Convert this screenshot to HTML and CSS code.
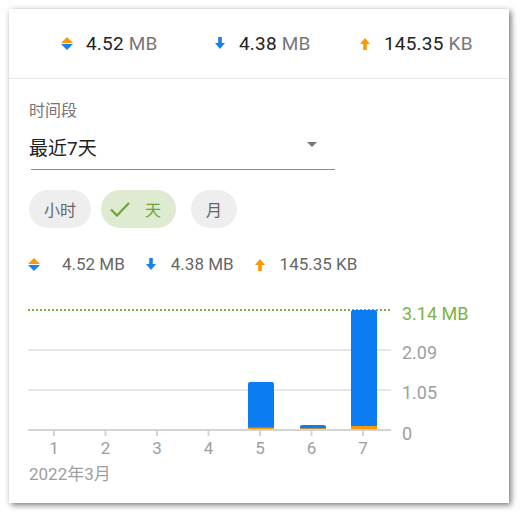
FILE: index.html
```html
<!DOCTYPE html>
<html lang="zh">
<head>
    <meta charset="UTF-8">
    <meta name="viewport" content="width=device-width, initial-scale=1.0">
    <title>流量统计</title>
    <link rel="stylesheet" href="styles.css">
</head>
<body>
    <div class="card">
        <!-- Totals -->
        <div class="totals">
            <div class="stat">
                <svg class="icon" viewBox="0 0 12 13"><path d="M0 6L6 0L12 6Z" fill="#ff9800"/><path d="M0 7L12 7L6 13Z" fill="#1a7ff0"/></svg>
                <span class="num">4.52</span><span class="unit">MB</span>
            </div>
            <div class="stat">
                <svg class="icon" viewBox="0 0 12 13"><path d="M4.2 0H7.8V6H11L6 12L1 6H4.2Z" fill="#1a7ff0"/></svg>
                <span class="num">4.38</span><span class="unit">MB</span>
            </div>
            <div class="stat">
                <svg class="icon" viewBox="0 0 12 13"><path d="M4.2 13H7.8V7H11L6 1L1 7H4.2Z" fill="#ff9800"/></svg>
                <span class="num">145.35</span><span class="unit">KB</span>
            </div>
        </div>

        <div class="content">
            <!-- Period -->
            <div class="field">
                <div class="field-label">时间段</div>
                <div class="select">
                    <span class="select-value">最近7天</span>
                    <span class="caret"></span>
                </div>
                <div class="underline"></div>
            </div>

            <div class="chips">
                <span class="chip">小时</span>
                <span class="chip chip-on">
                    <svg class="check" viewBox="0 0 20 16"><polyline points="1,8.5 7,14.5 19,2" fill="none" stroke="#6ca23f" stroke-width="2.2"/></svg>
                    天
                </span>
                <span class="chip">月</span>
            </div>

            <div class="legend">
                <svg class="icon icon-first" viewBox="0 0 12 13"><path d="M0 6L6 0L12 6Z" fill="#ff9800"/><path d="M0 7L12 7L6 13Z" fill="#1a7ff0"/></svg>
                <span class="legend-text">4.52 MB</span>
                <svg class="icon" viewBox="0 0 12 13"><path d="M4.2 0H7.8V6H11L6 12L1 6H4.2Z" fill="#1a7ff0"/></svg>
                <span class="legend-text">4.38 MB</span>
                <svg class="icon" viewBox="0 0 12 13"><path d="M4.2 13H7.8V7H11L6 1L1 7H4.2Z" fill="#ff9800"/></svg>
                <span class="legend-text">145.35 KB</span>
            </div>

            <!-- Chart -->
            <svg class="chart" width="462" height="163" viewBox="0 0 462 163">
                <line x1="0" y1="51" x2="363" y2="51" class="grid"/>
                <line x1="0" y1="91" x2="363" y2="91" class="grid"/>
                <line x1="0" y1="11" x2="363" y2="11" class="max-line"/>

                <path d="M220 130V85Q220 83 222 83H244Q246 83 246 85V130Z" class="bar-down"/>
                <rect x="220" y="128.5" width="26" height="1.5" class="bar-up"/>
                <path d="M272 130V128Q272 126 274 126H296Q298 126 298 128V130Z" class="bar-down"/>
                <rect x="272" y="129.3" width="26" height="0.7" class="bar-up"/>
                <path d="M323 130V13Q323 11 325 11H347Q349 11 349 13V130Z" class="bar-down"/>
                <rect x="323" y="127" width="26" height="3" class="bar-up"/>

                <line x1="0" y1="131" x2="363" y2="131" class="axis"/>
                <g class="axis">
                    <line x1="26" y1="132" x2="26" y2="137"/>
                    <line x1="77.5" y1="132" x2="77.5" y2="137"/>
                    <line x1="129" y1="132" x2="129" y2="137"/>
                    <line x1="180.5" y1="132" x2="180.5" y2="137"/>
                    <line x1="232" y1="132" x2="232" y2="137"/>
                    <line x1="283.5" y1="132" x2="283.5" y2="137"/>
                    <line x1="335" y1="132" x2="335" y2="137"/>
                </g>

                <text x="374" y="21" class="y-label max-label">3.14 MB</text>
                <text x="374" y="60" class="y-label">2.09</text>
                <text x="374" y="100" class="y-label">1.05</text>
                <text x="374" y="141" class="y-label">0</text>

                <g class="x-label">
                    <text x="26" y="155">1</text>
                    <text x="77.5" y="155">2</text>
                    <text x="129" y="155">3</text>
                    <text x="180.5" y="155">4</text>
                    <text x="232" y="155">5</text>
                    <text x="283.5" y="155">6</text>
                    <text x="335" y="155">7</text>
                </g>
            </svg>
            <div class="month">2022年3月</div>
        </div>
    </div>
</body>
</html>
```

FILE: styles.css
```css
body {
    margin: 0;
    background-color: #fff;
    font-family: Roboto, "Noto Sans CJK SC", sans-serif;
}
.card {
    margin: 9px;
    width: 500px;
    height: 494px;
    background-color: #fff;
    box-shadow: 2px 2px 6px rgba(0, 0, 0, 0.55);
}
.totals {
    display: grid;
    grid-template-columns: 153px 145px auto;
    align-items: center;
    height: 69px;
    padding-left: 52px;
    border-bottom: 1px solid #e8e8e8;
}
.stat {
    display: flex;
    align-items: center;
    font-size: 19px;
    letter-spacing: 0.01em;
}
.icon {
    width: 12px;
    height: 13px;
    flex: none;
}
.stat .icon {
    margin-right: 13px;
}
.num {
    color: #222;
    margin-right: 5px;
}
.unit {
    color: #777;
}
.content {
    padding: 0 19px;
}
.field {
    padding-top: 22px;
}
.field-label {
    font-size: 16px;
    line-height: 20px;
    color: #757575;
    margin-left: 1px;
}
.select {
    display: flex;
    align-items: center;
    justify-content: space-between;
    width: 289px;
    margin-top: 13px;
    height: 24px;
}
.select-value {
    font-size: 19px;
    color: #212121;
    margin-left: 1px;
}
.caret {
    width: 0;
    height: 0;
    border-left: 5px solid transparent;
    border-right: 5px solid transparent;
    border-top: 5px solid #757575;
    margin-top: -4px;
}
.underline {
    margin-top: 11px;
    margin-left: 3px;
    width: 304px;
    height: 1px;
    background-color: #8a8a8a;
}
.chips {
    display: flex;
    margin-top: 20px;
    margin-left: 1px;
}
.chip {
    display: flex;
    align-items: center;
    height: 38px;
    padding: 0 15px;
    border-radius: 19px;
    background-color: #eeeeee;
    color: #666;
    font-size: 16px;
    margin-right: 10px;
}
.chip-on {
    padding-left: 9px;
    background-color: #deebd1;
    color: #6ca23f;
    margin-right: 15px;
}
.check {
    width: 20px;
    height: 16px;
    margin-right: 15px;
}
.legend {
    display: flex;
    align-items: center;
    margin-top: 26px;
    height: 20px;
    color: #666;
    font-size: 17px;
}
.legend .icon {
    margin-right: 14px;
}
.legend .icon-first {
    margin-right: 22px;
}
.legend-text {
    margin-right: 20px;
}
.chart {
    display: block;
    margin-top: 25px;
}
.grid {
    stroke: #d0d0d0;
    stroke-width: 1;
}
.max-line {
    stroke: #7cb342;
    stroke-width: 2;
    stroke-dasharray: 2 2;
}
.axis {
    stroke: #d4d4d4;
    stroke-width: 2;
}
.bar-down {
    fill: #0b7cf2;
}
.bar-up {
    fill: #ff9800;
}
.y-label {
    font-size: 18px;
    fill: #9e9e9e;
}
.max-label {
    fill: #7cb342;
}
.x-label text {
    font-size: 17px;
    fill: #9e9e9e;
    text-anchor: middle;
}
.month {
    font-size: 17px;
    line-height: 20px;
    margin-top: 2px;
    color: #9e9e9e;
    margin-left: 1px;
}
```
